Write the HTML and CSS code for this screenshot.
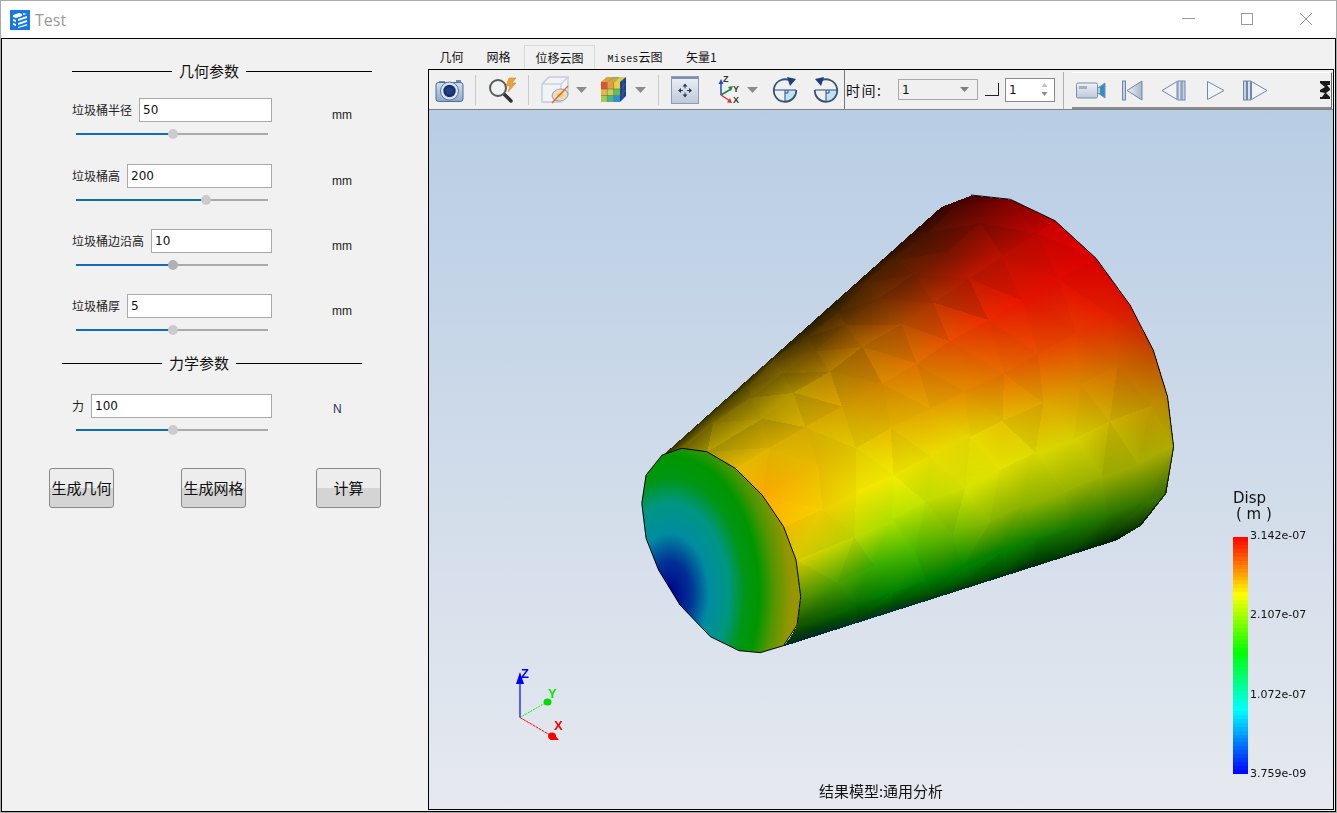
FILE: index.html
```html
<!DOCTYPE html>
<html lang="zh">
<head>
<meta charset="utf-8">
<title>Test</title>
<link rel="stylesheet" href="styles.css">
</head>
<body>
<div class="window">
  <header class="titlebar">
    <svg class="app-icon" width="20" height="20" viewBox="0 0 20 20">
      <rect width="20" height="20" fill="#1677e6"/>
      <path d="M3 5l6-2 3 1v2l-6 2-3-1zM3 9l3 1v2l-3-1zM3 13l3 1v2l-3-1zM8 9l9-3v2l-9 3zM8 13l9-3v2l-9 3zM8 17l9-3v1.500l-9 2.500zM13 3l4 1-4 1z" fill="#fff"/>
    </svg>
    <span class="app-title">Test</span>
    <div class="win-controls">
      <svg width="14" height="14" viewBox="0 0 14 14"><path d="M1 6.500h13" stroke="#999" fill="none"/></svg>
      <svg width="14" height="14" viewBox="0 0 14 14"><rect x="1.500" y="1.500" width="11" height="11" stroke="#999" fill="none"/></svg>
      <svg width="14" height="14" viewBox="0 0 14 14"><path d="M1 1l12 12M13 1L1 13" stroke="#999" fill="none"/></svg>
    </div>
  </header>
  <main class="content">
    <aside class="panel">
      <div class="section-title first"><i></i><span>几何参数</span><i></i></div>

      <div class="param">
        <div class="field"><label>垃圾桶半径</label><div class="input">50</div></div><span class="unit">mm</span>
        <div class="slider"><b style="width:50.5%"></b><u style="left:50.5%"></u></div>
      </div>
      <div class="param">
        <div class="field"><label>垃圾桶高</label><div class="input">200</div></div><span class="unit">mm</span>
        <div class="slider"><b style="width:67.700%"></b><u style="left:67.700%"></u></div>
      </div>
      <div class="param tight">
        <div class="field"><label>垃圾桶边沿高</label><div class="input">10</div></div><span class="unit">mm</span>
        <div class="slider"><b style="width:50.5%"></b><u class="hover" style="left:50.5%"></u></div>
      </div>
      <div class="param tight">
        <div class="field"><label>垃圾桶厚</label><div class="input">5</div></div><span class="unit">mm</span>
        <div class="slider"><b style="width:50.5%"></b><u style="left:50.5%"></u></div>
      </div>

      <div class="section-title second"><i></i><span>力学参数</span><i></i></div>

      <div class="param force">
        <div class="field"><label>力</label><div class="input">100</div></div><span class="unit newton">N</span>
        <div class="slider"><b style="width:50.5%"></b><u style="left:50.5%"></u></div>
      </div>

      <div class="actions">
        <button>生成几何</button>
        <button>生成网格</button>
        <button>计算</button>
      </div>
    </aside>

    <section class="results">
      <nav class="tabs">
        <span class="tab">几何</span>
        <span class="tab">网格</span>
        <span class="tab active">位移云图</span>
        <span class="tab"><em>Mises</em>云图</span>
        <span class="tab">矢量1</span>
      </nav>
      <div class="frame">
        <div class="toolbar">
          <svg class="m6" width="29" height="24" viewBox="0 0 29 24">
            <defs>
              <linearGradient id="cam" x1="0" y1="0" x2="0" y2="1"><stop offset="0" stop-color="#d3deec"/><stop offset="1" stop-color="#8ea8ca"/></linearGradient>
              <linearGradient id="pale" x1="0" y1="0" x2="0" y2="1"><stop offset="0" stop-color="#eef2f7"/><stop offset="1" stop-color="#bcc8da"/></linearGradient>
              <linearGradient id="slate" x1="0" y1="0" x2="1" y2="0"><stop offset="0" stop-color="#eef1f5"/><stop offset="1" stop-color="#a9b6c8"/></linearGradient>
            </defs>
            <path d="M4 3h6v2H4zM21 2h5v3h-5z" fill="#6f8bb4"/>
            <rect x="1" y="4.500" width="27" height="19" rx="2.500" fill="url(#cam)" stroke="#4f6d99"/>
            <circle cx="14.500" cy="13" r="9" fill="#dbe5f2" stroke="#5b77a3"/>
            <circle cx="14.500" cy="13" r="6.200" fill="#16306c"/>
            <circle cx="14.500" cy="13" r="3.800" fill="#1f3f86"/>
          </svg>
          <i class="sep m11"></i>
          <svg class="m12" width="30" height="26" viewBox="0 0 30 26">
            <path d="M13 14l9 8" stroke="#8a8a8a" stroke-width="2"/>
            <path d="M16 17l7 7" stroke="#333" stroke-width="3.500" stroke-linecap="round"/>
            <circle cx="10" cy="11" r="8" fill="#eef2f2" stroke="#5a5a5a" stroke-width="2"/>
            <path d="M21 1h7l-4 5h4l-8 9 2-6h-4z" fill="#eda33c" stroke="#c87a20" stroke-width=".5"/>
          </svg>
          <i class="sep m10"></i>
          <svg class="m12" width="28" height="28" viewBox="0 0 28 28">
            <path d="M1 8l7-7h19v18l-7 7H1z" fill="#f2f3f5" stroke="#c5ccd6" stroke-width="1.500"/>
            <path d="M1 8h19v18M20 8l7-7" fill="none" stroke="#ccd2dc" stroke-width="1.500"/>
            <ellipse cx="19" cy="19" rx="8" ry="6" fill="#e9dcc0" stroke="#96a0ad" transform="rotate(-12 19 19)"/>
            <ellipse cx="19" cy="19" rx="3.500" ry="2.200" fill="#f4c95a" transform="rotate(-12 19 19)"/>
            <path d="M11 27L27 10" stroke="#d8643c" stroke-width="1.300"/>
          </svg>
          <svg class="m7 caret" width="11" height="6" viewBox="0 0 11 6"><path d="M0 0h11L5.500 6z" fill="#8c8c8c"/></svg>
          <svg class="m13" width="27" height="27" viewBox="0 0 27 27">
            <path d="M1 6l6-5h19l-6 5z" fill="#6fb66a"/>
            <path d="M7 1h6l-6 5H1zM14 2h5l-5 4H8z" fill="#e0a040"/>
            <path d="M20 1h6l-6 5h-5z" fill="#d8d050"/>
            <path d="M1 6h6.300v7H1z" fill="#e84c34"/><path d="M7.300 6h6.300v7H7.300z" fill="#ec9a3a"/><path d="M13.600 6H20v7h-6.400z" fill="#e8d040"/>
            <path d="M1 13h6.300v6.500H1z" fill="#eeb53a"/><path d="M7.300 13h6.300v6.500H7.300z" fill="#c8d448"/><path d="M13.600 13H20v6.500h-6.400z" fill="#5cc060"/>
            <path d="M1 19.500h6.300V26H1z" fill="#a4cc50"/><path d="M7.300 19.500h6.300V26H7.300z" fill="#46b88c"/><path d="M13.600 19.500H20V26h-6.400z" fill="#2f8fd0"/>
            <path d="M20 6l6-5v19l-6 6z" fill="#1c3f97"/>
            <path d="M7.300 6v20M13.600 6v20M1 13h19M1 19.500h19M23 3.500v19.500M20 13l6-5.500M20 19.500l6-5.500" stroke="#5c6f5c" stroke-width=".6" fill="none"/>
          </svg>
          <svg class="m8 caret" width="11" height="6" viewBox="0 0 11 6"><path d="M0 0h11L5.500 6z" fill="#8c8c8c"/></svg>
          <i class="sep m12"></i>
          <svg class="m12" width="28" height="28" viewBox="0 0 28 28">
            <rect x=".5" y=".5" width="27" height="27" fill="url(#pale)" stroke="#8c9bb2"/>
            <rect x="1" y="1" width="26" height="2" fill="#7d90ac"/>
            <path d="M14 7.500l-2.500 3h5zM14 21.500l-2.500-3h5zM7 14.500l3-2.500v5zM21 14.500l-3-2.500v5z" fill="#2b3a52"/>
            <path d="M14 10v2.500M14 16.500V19M9.500 14.500H12M16 14.500h2.500" stroke="#2b3a52" fill="none"/>
          </svg>
          <svg class="m16" width="27" height="29" viewBox="0 0 27 29">
            <path d="M6 20V7" stroke="#1e4fc4" stroke-width="1.500"/><path d="M3.500 9L6 4l2.500 5z" fill="#1e4fc4"/>
            <path d="M6 20l10-6" stroke="#158a3a" stroke-width="1.500"/><path d="M13 12l5-1-2 5z" fill="#158a3a"/>
            <path d="M6 20l9 6" stroke="#d8363c" stroke-width="1.500"/><path d="M12 27.500l5 .5-2-5z" fill="#d8363c"/>
            <text class="ax-small" x="8" y="7">Z</text><text class="ax-small" x="18" y="17">Y</text><text class="ax-small" x="18" y="28">X</text>
          </svg>
          <svg class="m5 caret" width="11" height="6" viewBox="0 0 11 6"><path d="M0 0h11L5.500 6z" fill="#8c8c8c"/></svg>
          <svg class="m14" width="26" height="26" viewBox="0 0 26 26">
            <path d="M13 13h11a11 11 0 0 1-11 11z" fill="#bfe3f6"/>
            <path d="M2 13h22M13 13v11M16 13v3h-3" stroke="#2c4f78" fill="none"/>
            <path d="M18 3.500A11.200 11.200 0 1 0 24.200 13" fill="none" stroke="#38536f" stroke-width="1.800"/>
            <path d="M15 0l9 2-6 7z" fill="#1e3f78"/>
          </svg>
          <svg class="m15" width="26" height="26" viewBox="0 0 26 26">
            <path d="M13 13h11a11 11 0 0 1-11 11z" fill="#bfe3f6"/>
            <path d="M2 13h22M13 13v11M16 13v3h-3" stroke="#2c4f78" fill="none"/>
            <path d="M8 3.500A11.200 11.200 0 1 1 1.800 13" fill="none" stroke="#38536f" stroke-width="1.800"/>
            <path d="M11 0L2 2l6 7z" fill="#1e3f78"/>
          </svg>
          <i class="sep dark m5"></i>
          <span class="time-label">时间:</span>
          <div class="combo"><span>1</span><svg width="9" height="5" viewBox="0 0 9 5"><path d="M0 0h9L4.500 5z" fill="#7f7f7f"/></svg></div>
          <i class="corner"></i>
          <div class="spin"><span>1</span><svg width="7" height="13" viewBox="0 0 7 13"><path d="M3.500 0L6.500 4H.5z" fill="#c4c4c4"/><path d="M.5 9h6l-3 4z" fill="#8a8a8a"/></svg></div>
          <i class="sep mid"></i>
          <div class="toolbar2">
            <svg class="m4" width="30" height="17" viewBox="0 0 30 17">
              <rect x=".5" y="1" width="21" height="15" rx="1.500" fill="url(#pale)" stroke="#7d8ea8"/>
              <rect x="3" y="4" width="8" height="3" fill="#a4afbf"/>
              <path d="M22 6l7-5v15l-7-5z" fill="#2f8fc4" stroke="#7d8ea8"/>
              <rect x="22" y="6" width="2" height="5" fill="#bcd"/>
            </svg>
            <svg class="m16" width="21" height="21" viewBox="0 0 21 21">
              <rect x=".5" y="1" width="3" height="19" fill="#c7d0de" stroke="#6f88ab"/>
              <path d="M20 1v19L5 10.500z" fill="url(#slate)" stroke="#6f88ab"/>
            </svg>
            <svg class="m18" width="25" height="21" viewBox="0 0 25 21">
              <path d="M16 1.500v18L1 10.500z" fill="#f1f3f6" stroke="#6f88ab"/>
              <rect x="17" y="1" width="3" height="19" fill="#dbe1ea" stroke="#6f88ab"/>
              <rect x="21" y="1" width="3" height="19" fill="#c7d0de" stroke="#6f88ab"/>
            </svg>
            <svg class="m20" width="19" height="21" viewBox="0 0 19 21">
              <path d="M1.500 1.500v18L18 10.500z" fill="#f1f3f6" stroke="#6f88ab"/>
            </svg>
            <svg class="m18" width="25" height="21" viewBox="0 0 25 21">
              <rect x=".5" y="1" width="3" height="19" fill="#c7d0de" stroke="#6f88ab"/>
              <rect x="4.500" y="1" width="3" height="19" fill="#dbe1ea" stroke="#6f88ab"/>
              <path d="M8.500 1.500v18L24 10.500z" fill="#f1f3f6" stroke="#6f88ab"/>
            </svg>
            <svg class="more" width="12" height="18" viewBox="0 0 12 18">
              <rect x="1" width="10" height="18" fill="#1a1a1a"/>
              <path d="M1 2l5 4-5 3zM12 4H8l4 5zM1 11l5 1-3 4h-2zM11 9l-4 3 4 4z" fill="#e8e8e8"/>
            </svg>
          </div>
        </div>
        <div class="viewport">
          <canvas id="model" width="904" height="699"></canvas>
          <svg class="triad" width="80" height="80" viewBox="0 0 80 80">
            <path d="M11 67.500V25" stroke="#0000ff" stroke-width="1.200"/>
            <path d="M7 34l4-12 4 12z" fill="#0000ff"/>
            <path d="M11 67.500L38 52" stroke="#00ee00" stroke-dasharray="2 1"/>
            <ellipse cx="38.500" cy="52" rx="4" ry="3.500" fill="#00dd00"/>
            <path d="M11 67.500L41 85" stroke="#ff0000" stroke-dasharray="3 .6"/>
            <ellipse cx="43" cy="86" rx="4" ry="3.500" fill="#ff0000"/>
            <path d="M41 90l3-7 6 7z" fill="#ff0000"/>
            <text class="ax z" x="12" y="28">Z</text>
            <text class="ax y" x="39" y="48">Y</text>
            <text class="ax x" x="45" y="80">X</text>
          </svg>
          <div class="legend">
            <div class="legend-title">Disp<br><span>( m )</span></div>
            <div class="legend-body">
              <div id="bar" class="bar"></div>
              <ul class="ticks">
                <li>3.142e-07</li><li>2.107e-07</li><li>1.072e-07</li><li>3.759e-09</li>
              </ul>
            </div>
          </div>
          <div class="caption">结果模型:通用分析</div>
        </div>
      </div>
    </section>
  </main>
</div>
<script src="script.js"></script>
</body>
</html>
```
FILE: styles.css
```css
* { box-sizing: border-box; }
html, body { margin: 0; padding: 0; height: 100%; overflow: hidden; }
body { font-family: "Noto Sans CJK SC", "Noto Sans", sans-serif; color: #111; background: #fff; }

.window { width: 1337px; height: 813px; border: 1px solid #a9a9a9; background: #fff; display: flex; flex-direction: column; }

.titlebar { height: 37px; flex: none; display: flex; align-items: center; padding-left: 9px; }
.app-icon { display: block; }
.app-title { margin-left: 5px; font: 16px "Open Sans", sans-serif; color: #9a9a9a; }
.win-controls { margin-left: auto; display: flex; gap: 45px; padding-right: 23px; margin-top: -1px; }
.win-controls svg { display: block; }

.content { flex: 1; display: flex; border: 1px solid #000; background: #f1f1f1; min-height: 0; }

.panel { width: 426px; flex: none; padding-top: 22px; }
.section-title { display: flex; align-items: center; height: 20px; width: 300px; font-size: 15px; line-height: 20px; }
.section-title.first { margin-left: 70px; }
.section-title.second { margin-left: 60px; margin-top: 13px; }
.section-title i { height: 1px; background: #000; flex: 1; }
.section-title i:first-child { flex: none; width: 100px; }
.section-title span { padding: 0 7px; white-space: nowrap; }

.param { margin-left: 70px; width: 300px; display: grid; grid-template-columns: 200px 1fr; margin-top: 20px; }
.section-title.first + .param { margin-top: 17px; }
.param.tight { margin-top: 19px; }
.param.force { margin-top: 21px; }
.field { display: flex; align-items: center; gap: 7px; height: 24px; }
.field label { font-size: 12px; line-height: 24px; white-space: nowrap; color: #222; }
.input { flex: 1; height: 24px; background: #fff; border: 1px solid #a9a9a9; font: 12px/22px "DejaVu Sans", sans-serif; padding-left: 3px; color: #111; }
.unit { height: 24px; font: 12px/34px "Liberation Sans", sans-serif; margin-left: 60px; color: #222; }
.unit.newton { line-height: 30px; margin-left: 61px; color: #1c3560; }
.slider { grid-column: 1; position: relative; margin: 11px 4px 9px 4px; height: 2px; background: #aaa; }
.slider b { display: block; height: 2px; background: #0f6cbd; }
.slider u { position: absolute; top: 50%; width: 10px; height: 10px; margin: -5px 0 0 -5px; border-radius: 50%; background: #cbcbcb; }
.slider u.hover { background: #aeb2b6; }

.actions { margin: 28px 0 0 47px; display: flex; }
.actions button { width: 65px; height: 40px; padding: 0; margin-left: 67px; font: 15px/38px "Noto Sans CJK SC", sans-serif; color: #111; border: 1px solid #8a8a8a; border-radius: 3px; background: linear-gradient(#ededed 0, #ededed 50%, #d4d4d4 50%, #d4d4d4 100%); }
.actions button:first-child { margin-left: 0; }
.actions button:last-child { margin-left: 70px; }

.results { flex: 1; min-width: 0; display: flex; flex-direction: column; }
.tabs { height: 30px; flex: none; display: flex; align-items: flex-end; font-size: 12px; }
.tab { height: 24px; line-height: 24px; padding: 0 11.500px; white-space: nowrap; color: #111; }
.tab em { font: normal 10px/24px "Liberation Mono", monospace; letter-spacing: .2px; }
.tab.active { border: 1px solid #d9d9d9; border-bottom: 0; padding: 0 10.500px; line-height: 23px; margin: 0 0 0 2px; width: 71px; }
.tab.active + .tab { margin-left: 1px; padding-right: 12px; }
.frame { flex: none; width: 906px; height: 741px; border: 1px solid #000; display: flex; flex-direction: column; }

.toolbar { height: 40px; flex: none; display: flex; align-items: center; background: #f0f0f0; border-bottom: 1px solid #808080; }
.toolbar svg { display: block; flex: none; }
.sep { width: 1px; height: 30px; background: #c9c9c9; flex: none; }
.sep.dark { height: 39px; background: #777; }
.sep.mid { height: 37px; margin: 2px 0 0 8px; background: #b0b0b0; }
.m4 { margin-left: 4px; } .m5 { margin-left: 5px; } .m6 { margin-left: 6px; } .m7 { margin-left: 7px; } .m8 { margin-left: 8px; }
.m10 { margin-left: 10px; } .m11 { margin-left: 11px; } .m12 { margin-left: 12px; } .m13 { margin-left: 13px; } .m14 { margin-left: 14px; }
.m15 { margin-left: 15px; } .m16 { margin-left: 16px; } .m18 { margin-left: 18px; } .m20 { margin-left: 20px; }
.caret { margin-top: 1px; }
.ax-small { font: 700 9px "Liberation Sans", sans-serif; fill: #333; }
.time-label { margin-left: 1px; width: 52px; font-size: 14px; letter-spacing: 1.500px; white-space: nowrap; }
.combo { width: 80px; height: 21px; border: 1px solid #a9a9a9; background: #f0f0f0; display: flex; align-items: center; justify-content: space-between; padding: 0 8px 0 3px; font: 12px "DejaVu Sans", sans-serif; }
.corner { width: 14px; height: 13px; margin-left: 7px; border-right: 1px solid #222; border-bottom: 1px solid #222; flex: none; }
.spin { width: 50px; height: 24px; margin-left: 6px; border: 1px solid #8a8a8a; background: #fff; display: flex; align-items: center; justify-content: space-between; padding: 0 6px 0 3px; font: 12px "DejaVu Sans", sans-serif; }
.toolbar2 { flex: 1; height: 37px; margin: 2px 1px 0 8px; display: flex; align-items: center; border-top: 1px solid #fff; border-bottom: 2px solid #8c8c8c; border-right: 1px solid #666; }
.more { margin-left: auto; }

.viewport { flex: 1; position: relative; background: linear-gradient(#b8cde4, #e6e9ef); overflow: hidden; }
#model { position: absolute; left: 0; top: 0; display: block; }
.triad { position: absolute; left: 80px; top: 540px; overflow: visible; }
.ax { font: 700 13px "Liberation Sans", sans-serif; }
.ax.z { fill: #0000ff; } .ax.y { fill: #00ee00; } .ax.x { fill: #ff0000; }
.legend { position: absolute; left: 804px; top: 380px; }
.legend-title { font: 15px/16px "DejaVu Sans", sans-serif; color: #111; height: 47px; }
.legend-title span { margin-left: 3px; }
.legend-body { display: flex; }
.bar { width: 15px; height: 237px; }
.ticks { list-style: none; margin: -10px 0 -8px 2px; padding: 0; height: 255px; display: flex; flex-direction: column; justify-content: space-between; font: 11px/17px "DejaVu Sans", sans-serif; color: #111; }
.caption { position: absolute; left: 0; bottom: 8px; width: 904px; text-align: center; font-size: 15px; line-height: 20px; color: #111; }
```
FILE: script.js
```js
(function () {
  var L = [[90,825],[115,813],[145,805],[215,815],[295,865],[370,945],[430,1040],[465,1140],[478,1250],[468,1335],[445,1375],[430,1397]];
  var R = [[870,80],[955,45],[1065,58],[1190,122],[1305,235],[1400,375],[1465,510],[1505,650],[1522,800],[1500,940],[1430,1035],[1360,1080]];
  var C = [
    [[45,45,0],[50,45,0],[40,30,0],[40,20,0],[50,5,0]],
    [[70,65,0],[90,75,0],[70,45,0],[80,30,0],[70,0,0]],
    [[120,105,0],[125,105,0],[110,60,0],[110,25,0],[125,0,0]],
    [[170,150,0],[175,145,0],[170,90,0],[185,25,0],[190,0,0]],
    [[230,185,0],[210,170,0],[215,110,0],[228,25,0],[218,0,0]],
    [[250,170,0],[225,200,0],[228,155,0],[228,80,0],[225,20,0]],
    [[245,190,0],[240,235,0],[228,212,0],[218,150,0],[195,70,0]],
    [[215,205,0],[170,220,0],[222,225,0],[212,205,0],[185,130,0]],
    [[90,150,0],[50,175,0],[130,180,0],[150,175,0],[170,170,0]],
    [[20,85,0],[0,125,0],[0,130,0],[25,120,0],[60,115,0]],
    [[5,55,10],[0,80,0],[0,85,0],[0,70,0],[10,55,0]],
    [[0,40,40],[0,50,40],[0,50,30],[0,40,20],[0,30,0]]
  ];
  var CAP = [[90,825],[145,805],[215,815],[295,865],[370,945],[430,1040],[465,1140],[478,1250],[468,1335],[430,1397],[365,1418],[305,1412],[225,1370],[140,1275],[80,1170],[45,1075],[33,970],[45,885]];
  var RAMP = [[0,[0,0,140]],[60,[0,50,150]],[110,[0,140,160]],[165,[0,150,130]],[210,[0,150,20]],[250,[0,150,0]],[290,[80,150,0]],[340,[150,150,0]]];

  var canvas = document.getElementById('model');
  var ctx = canvas.getContext('2d');
  var W = canvas.width, H = canvas.height;
  var img = ctx.createImageData(W, H);
  var seed = 12345;
  function rnd() { seed = (seed * 16807) % 2147483647; return seed / 2147483647; }
  function px(p) { return [201 + p[0] / 2.8, 70 + p[1] / 3]; }
  function put(x, y, r, g, b) {
    if (x < 0 || y < 0 || x >= W || y >= H) return;
    var i = (y * W + x) * 4;
    img.data[i] = r; img.data[i + 1] = g; img.data[i + 2] = b; img.data[i + 3] = 255;
  }
  function colour(row, u) {
    var f = u * 4, k = Math.min(3, Math.floor(f)), t = f - k, a = C[row][k], b = C[row][k + 1];
    return [a[0] + (b[0] - a[0]) * t, a[1] + (b[1] - a[1]) * t, a[2] + (b[2] - a[2]) * t];
  }
  function tri(a, b, c, k) {
    var x0 = Math.floor(Math.min(a.x, b.x, c.x)), x1 = Math.ceil(Math.max(a.x, b.x, c.x));
    var y0 = Math.floor(Math.min(a.y, b.y, c.y)), y1 = Math.ceil(Math.max(a.y, b.y, c.y));
    var d = (b.y - c.y) * (a.x - c.x) + (c.x - b.x) * (a.y - c.y);
    if (Math.abs(d) < 1e-6) return;
    for (var y = y0; y <= y1; y++) for (var x = x0; x <= x1; x++) {
      var w0 = ((b.y - c.y) * (x - c.x) + (c.x - b.x) * (y - c.y)) / d;
      var w1 = ((c.y - a.y) * (x - c.x) + (a.x - c.x) * (y - c.y)) / d;
      var w2 = 1 - w0 - w1;
      if (w0 < -0.005 || w1 < -0.005 || w2 < -0.005) continue;
      put(x, y,
        Math.min(255, (w0 * a.c[0] + w1 * b.c[0] + w2 * c.c[0]) * k),
        Math.min(255, (w0 * a.c[1] + w1 * b.c[1] + w2 * c.c[1]) * k),
        Math.min(255, (w0 * a.c[2] + w1 * b.c[2] + w2 * c.c[2]) * k));
    }
  }
  function facet(row) {
    var spread = row < 4 ? 0.14 : 0.06;
    return 1 - spread / 2 + rnd() * spread;
  }
  var N = 10, V = [], i, j;
  for (i = 0; i < 12; i++) {
    V.push([]);
    for (j = 0; j <= N; j++) {
      var u = j / N + ((i % 2) && j > 0 && j < N ? 0.5 / N : 0);
      var q = px([L[i][0] + (R[i][0] - L[i][0]) * u, L[i][1] + (R[i][1] - L[i][1]) * u]);
      if (i > 0 && i < 11 && j > 0 && j < N) { q[0] += (rnd() - 0.5) * 6; q[1] += (rnd() - 0.5) * 4; }
      V[i].push({ x: q[0], y: q[1], c: colour(i, Math.min(1, u)) });
    }
  }
  for (i = 0; i < 11; i++) for (j = 0; j < N; j++) {
    var a = V[i][j], b = V[i][j + 1], c = V[i + 1][j], d = V[i + 1][j + 1];
    if (i % 2) {
      tri(a, b, d, facet(i));
      tri(a, d, c, facet(i));
    } else {
      tri(a, b, c, facet(i));
      tri(b, d, c, facet(i));
    }
  }
  /* end cap: continuous field around the minimum */
  var cap = CAP.map(px);
  function inside(x, y) {
    var r = false;
    for (var m = 0, n = cap.length - 1; m < cap.length; n = m++) {
      if ((cap[m][1] > y) !== (cap[n][1] > y) && x < (cap[n][0] - cap[m][0]) * (y - cap[m][1]) / (cap[n][1] - cap[m][1]) + cap[m][0]) r = !r;
    }
    return r;
  }
  for (var y = 300; y < 560; y++) for (var x = 205; x < 385; x++) {
    if (!inside(x + 0.5, y + 0.5)) continue;
    var zx = (x - 201) * 2.8, zy = (y - 70) * 3;
    var dist = Math.sqrt(Math.pow(zx - 110, 2) + Math.pow((zy - 1240) / 1.65, 2));
    var s = RAMP.length - 1, col = RAMP[s][1];
    for (var h = 0; h < s; h++) {
      if (dist <= RAMP[h + 1][0]) {
        var t = (dist - RAMP[h][0]) / (RAMP[h + 1][0] - RAMP[h][0]), p = RAMP[h][1], e = RAMP[h + 1][1];
        col = [p[0] + (e[0] - p[0]) * t, p[1] + (e[1] - p[1]) * t, p[2] + (e[2] - p[2]) * t];
        break;
      }
    }
    put(x, y, col[0], col[1], col[2]);
  }
  ctx.putImageData(img, 0, 0);
  ctx.strokeStyle = '#000';
  ctx.lineWidth = 1;
  ctx.beginPath();
  cap.forEach(function (p, n) { if (n) ctx.lineTo(p[0], p[1]); else ctx.moveTo(p[0], p[1]); });
  ctx.closePath();
  ctx.stroke();
  ctx.beginPath();
  R.slice(1, 11).map(px).forEach(function (p, n) { if (n) ctx.lineTo(p[0], p[1]); else ctx.moveTo(p[0], p[1]); });
  ctx.stroke();

  /* colour bar: banded scale from the maximum down to the minimum */
  var keys = [[0,[255,0,0]],[0.246,[255,255,0]],[0.485,[0,255,0]],[0.73,[0,255,255]],[1,[0,0,255]]];
  var bands = 60, stops = [];
  for (var b2 = 0; b2 < bands; b2++) {
    var pos = (b2 + 0.5) / bands, k = 0;
    while (k < keys.length - 2 && pos > keys[k + 1][0]) k++;
    var f = (pos - keys[k][0]) / (keys[k + 1][0] - keys[k][0]);
    var rgb = [0, 1, 2].map(function (n) { return Math.round(keys[k][1][n] + (keys[k + 1][1][n] - keys[k][1][n]) * f); });
    var css = 'rgb(' + rgb.join(',') + ')';
    stops.push(css + ' ' + (b2 / bands * 100) + '%', css + ' ' + ((b2 + 1) / bands * 100) + '%');
  }
  document.getElementById('bar').style.background = 'linear-gradient(' + stops.join(',') + ')';
})();
```
